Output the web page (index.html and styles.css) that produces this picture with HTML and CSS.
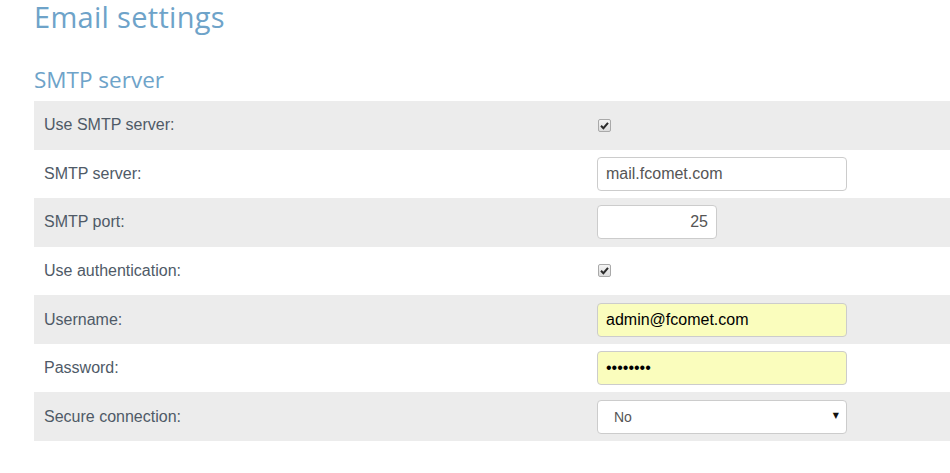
FILE: index.html
```html
<!DOCTYPE html>
<html>
<head>
<meta charset="utf-8">
<link rel="stylesheet" href="styles.css">
</head>
<body>
<div class="page">
  <h1 class="title">Email settings</h1>
  <h2 class="subtitle">SMTP server</h2>
  <div class="form">
    <div class="row alt">
      <div class="label">Use SMTP server:</div>
      <div class="value"><span class="check"><svg width="9" height="9" viewBox="0 0 9 9"><path d="M1 4.8 L3.4 7.2 L8 1.8" fill="none" stroke="#2b2b2b" stroke-width="2"/></svg></span></div>
    </div>
    <div class="row">
      <div class="label">SMTP server:</div>
      <div class="value"><input class="field" type="text" value="mail.fcomet.com"></div>
    </div>
    <div class="row alt">
      <div class="label">SMTP port:</div>
      <div class="value"><input class="field port" type="text" value="25"></div>
    </div>
    <div class="row">
      <div class="label">Use authentication:</div>
      <div class="value"><span class="check"><svg width="9" height="9" viewBox="0 0 9 9"><path d="M1 4.8 L3.4 7.2 L8 1.8" fill="none" stroke="#2b2b2b" stroke-width="2"/></svg></span></div>
    </div>
    <div class="row alt">
      <div class="label">Username:</div>
      <div class="value"><input class="field autofill" type="text" value="admin@fcomet.com"></div>
    </div>
    <div class="row">
      <div class="label">Password:</div>
      <div class="value"><input class="field autofill" type="password" value="password"></div>
    </div>
    <div class="row alt">
      <div class="label">Secure connection:</div>
      <div class="value">
        <div class="select-wrap">
          <select class="field select"><option>No</option></select>
          <span class="arrow">▼</span>
        </div>
      </div>
    </div>
  </div>
</div>
</body>
</html>
```

FILE: styles.css
```css
html, body {
  margin: 0;
  padding: 0;
  background: #fff;
}
.page {
  padding-left: 34px;
}
.title {
  margin: 0;
  font-family: "Open Sans", "DejaVu Sans", sans-serif;
  font-weight: 400;
  font-size: 29px;
  line-height: 33px;
  color: #6ea3c9;
  letter-spacing: 0.3px;
}
.subtitle {
  margin: 26px 0 0 0;
  font-family: "Open Sans", "DejaVu Sans", sans-serif;
  font-weight: 400;
  font-size: 22.5px;
  line-height: 42px;
  color: #6ea3c9;
  letter-spacing: 0;
}
.form {
  display: grid;
  grid-auto-rows: 48.57px;
}
.row {
  display: grid;
  grid-template-columns: 563px 1fr;
  align-items: center;
  background: #fff;
}
.row.alt {
  background: #ececec;
}
.label {
  padding-left: 10px;
  font-family: "Liberation Sans", Arial, sans-serif;
  font-size: 16px;
  color: #4f5a67;
}
.value {
  display: flex;
  align-items: center;
}
.check {
  width: 11px;
  height: 11px;
  margin-left: 1px;
  border: 1px solid #a9a9a9;
  border-radius: 2px;
  background: linear-gradient(#f4f4f4, #dcdcdc);
  display: flex;
  align-items: center;
  justify-content: center;
}
.field {
  box-sizing: border-box;
  width: 250px;
  height: 34px;
  border: 1px solid #cccccc;
  border-radius: 4px;
  padding: 0 8px;
  font-family: "Liberation Sans", Arial, sans-serif;
  font-size: 16px;
  color: #555555;
  background: #fff;
  outline: none;
  margin: 0;
}
.port {
  width: 120px;
  text-align: right;
}
.autofill {
  background: #fafdbd;
  color: #000;
}
.select-wrap {
  position: relative;
  width: 250px;
  height: 34px;
}
.select {
  -webkit-appearance: none;
  appearance: none;
  font-size: 14px;
  padding-left: 16px;
  color: #555;
}
.arrow {
  position: absolute;
  right: 8px;
  top: 11px;
  font-family: "DejaVu Sans", sans-serif;
  font-size: 8px;
  color: #111;
  pointer-events: none;
}
```
